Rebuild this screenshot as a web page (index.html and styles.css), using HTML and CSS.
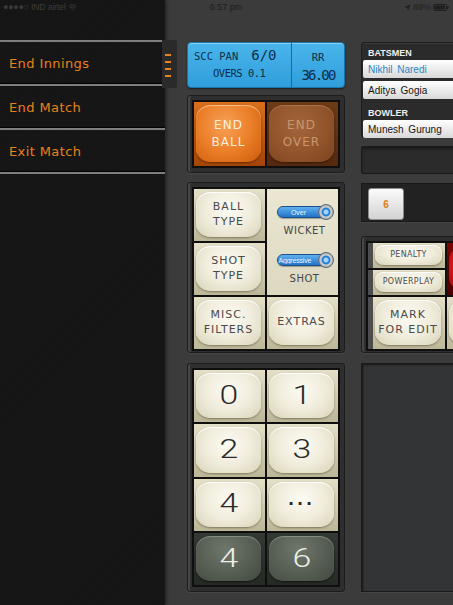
FILE: index.html
```html
<!DOCTYPE html>
<html>
<head>
<meta charset="utf-8">
<title>Scorer</title>
<link rel="stylesheet" href="styles.css">
</head>
<body>
<div class="statusbar">
  <div class="sb-left">●●●●○ IND airtel <svg class="wifi" width="9" height="7" viewBox="0 0 9 7"><path d="M0.5 2.5 Q4.5 -0.8 8.5 2.5 M2 4 Q4.5 1.8 7 4 M3.5 5.5 Q4.5 4.6 5.5 5.5" fill="none" stroke="currentColor" stroke-width="1"/></svg></div>
  <div class="sb-center">6:57 pm</div>
  <div class="sb-right"><svg width="7" height="7" viewBox="0 0 7 7"><path d="M6.5 0.5 L0.5 3 L3.2 3.8 L4 6.5 Z" fill="currentColor"/></svg> 88% <svg width="16" height="7" viewBox="0 0 16 7"><rect x="0.5" y="0.5" width="13" height="6" rx="1" fill="none" stroke="currentColor"/><rect x="1.5" y="1.5" width="10.5" height="4" fill="currentColor"/><rect x="14" y="2" width="1.5" height="3" fill="currentColor"/></svg></div>
</div>
<div class="app">
  <aside class="sidebar">
    <nav class="menu">
      <div class="menu-item">End Innings</div>
      <div class="menu-item">End Match</div>
      <div class="menu-item">Exit Match</div>
    </nav>
  </aside>
  <div class="handle"><span></span><span></span><span></span><span></span></div>
  <main class="main">
    <section class="col-left">
      <div class="lcd">
        <div class="lcd-left">
          <div class="lcd-row"><span class="lcd-sm">SCC PAN</span><span class="lcd-lg">6/0</span></div>
          <div class="lcd-row lcd-row2"><span class="lcd-sm lcd-tight">OVERS 0.1</span></div>
        </div>
        <div class="lcd-right">
          <span class="lcd-sm">RR</span>
          <span class="lcd-lg lcd-rr">36.00</span>
        </div>
      </div>

      <div class="panel panel-actions">
        <div class="grid grid-actions">
          <div class="cell cell-orange"><div class="face">END<br>BALL</div></div>
          <div class="cell cell-brown"><div class="face">END<br>OVER</div></div>
        </div>
      </div>

      <div class="panel panel-options">
        <div class="grid grid-options">
          <div class="cell"><div class="face">BALL<br>TYPE</div></div>
          <div class="cell cell-toggles">
            <div class="toggle"><span class="toggle-text">Over</span><span class="knob"></span></div>
            <div class="toggle-label">WICKET</div>
            <div class="toggle toggle2"><span class="toggle-text">Aggressive</span><span class="knob"></span></div>
            <div class="toggle-label">SHOT</div>
          </div>
          <div class="cell"><div class="face">SHOT<br>TYPE</div></div>
          <div class="cell"><div class="face">MISC.<br>FILTERS</div></div>
          <div class="cell"><div class="face">EXTRAS</div></div>
        </div>
      </div>

      <div class="panel panel-numpad">
        <div class="grid grid-numpad">
          <div class="cell num"><div class="face"><span>0</span></div></div>
          <div class="cell num"><div class="face"><span>1</span></div></div>
          <div class="cell num"><div class="face"><span>2</span></div></div>
          <div class="cell num"><div class="face"><span>3</span></div></div>
          <div class="cell num"><div class="face"><span>4</span></div></div>
          <div class="cell num"><div class="face"><span class="dots">···</span></div></div>
          <div class="cell num cell-dark"><div class="face"><span>4</span></div></div>
          <div class="cell num cell-dark"><div class="face"><span>6</span></div></div>
        </div>
      </div>
    </section>

    <section class="col-right">
      <div class="players">
        <div class="plabel">BATSMEN</div>
        <div class="prow prow-active">Nikhil Naredi</div>
        <div class="prow">Aditya Gogia</div>
        <div class="plabel plabel2">BOWLER</div>
        <div class="prow">Munesh Gurung</div>
      </div>
      <div class="darkbox"></div>
      <div class="tabs"><div class="tab">6</div></div>
      <div class="panel panel-extras">
        <div class="grid grid-extras">
          <div class="cell cell-small cell-edge"><div class="face face-small">PENALTY</div></div>
          <div class="cell cell-red"><div class="face"></div></div>
          <div class="cell cell-small cell-edge"><div class="face face-small">POWERPLAY</div></div>
          <div class="cell cell-edge"><div class="face">MARK<br>FOR EDIT</div></div>
          <div class="cell"><div class="face"></div></div>
        </div>
      </div>
      <div class="bigbox"></div>
    </section>
  </main>
</div>
</body>
</html>
```

FILE: styles.css
```css
* { box-sizing: border-box; margin: 0; padding: 0; }
html, body { width: 453px; height: 605px; overflow: hidden; }
body {
  background: #3b3b3b;
  font-family: "DejaVu Sans", sans-serif;
  position: relative;
}

/* status bar */
.statusbar {
  position: absolute; top: 0; left: 0; width: 453px; height: 14px;
  display: grid; grid-template-columns: 1fr auto 1fr; align-items: center;
  font: 9px "Liberation Sans", sans-serif; z-index: 10; padding: 0 4px 0 3px;
}
.sb-left { color: #3a3a3a; display: flex; align-items: center; gap: 3px; letter-spacing: -0.3px; }
.sb-center { color: #1c1c1c; }
.sb-right { color: #1f1f1f; display: flex; align-items: center; justify-content: flex-end; gap: 2px; }

.app { display: flex; height: 605px; position: relative; }

/* sidebar */
.sidebar {
  width: 165px; flex: none; position: relative; z-index: 1;
  background: repeating-linear-gradient(135deg, #171717 0 1px, #151515 1px 3px);
  box-shadow: 2px 0 3px rgba(0,0,0,.35);
}
.menu { margin-top: 40px; border-top: 2px solid #7e7e7e; }
.menu-item {
  height: 44px; border-bottom: 2px solid #7e7e7e;
  box-shadow: inset 0 -1px 0 #000;
  display: flex; align-items: center; padding-left: 9px;
  color: #e8821b; font-size: 13px; letter-spacing: .4px;
}
.handle {
  position: absolute; left: 162px; top: 40px; width: 15px; height: 48px; z-index: 2;
  background: #2a2a2a; border-radius: 0 2px 2px 0;
  display: flex; flex-direction: column; gap: 5px; padding: 14px 0 0 3px;
}
.handle span { width: 6px; height: 2px; background: #e8821b; }

/* main */
.main {
  flex: 1; display: flex; gap: 16px; padding: 42px 0 0 22px; overflow: hidden;
}
.col-left { width: 158px; flex: none; display: flex; flex-direction: column; }
.col-right { width: 180px; flex: none; display: flex; flex-direction: column; }

/* LCD */
.lcd {
  height: 46px; display: flex;
  background: linear-gradient(#4ab5ec, #2f9edb);
  border: 1px solid #1b76ad; border-radius: 4px;
  box-shadow: inset 0 1px 0 rgba(255,255,255,.35), 0 1px 2px rgba(0,0,0,.5);
  color: #0e2d48; font-family: "DejaVu Sans Mono", monospace;
}
.lcd-left { width: 104px; border-right: 1px solid #1c6898; padding: 4px 0 0 6px; display: flex; flex-direction: column; }
.lcd-row { display: flex; align-items: baseline; gap: 13px; height: 20px; }
.lcd-row2 { padding-left: 19px; }
.lcd-right { flex: 1; display: flex; flex-direction: column; align-items: center; padding-top: 4px; }
.lcd-right .lcd-sm { height: 20px; display: flex; align-items: center; }
.lcd-sm { font-size: 10.5px; }
.lcd-tight { letter-spacing: -0.5px; }
.lcd-lg { font-size: 14px; }
.lcd-rr { letter-spacing: -1.8px; }

/* panels */
.panel {
  background: #2e2e2e; border: 1px solid #1c1c1c; border-radius: 3px;
  box-shadow: inset 2px 0 0 #474747, 0 1px 0 #464646;
  padding: 4px;
}
.grid { display: grid; background: #0f0f0f; padding: 2px; gap: 2px; height: 100%; }
.panel-actions { margin-top: 7px; height: 78px; }
.grid-actions { grid-template-columns: 1fr 1fr; }
.panel-options { margin-top: 9px; height: 171px; padding-bottom: 1px; }
.grid-options { grid-template-columns: 1fr 1fr; grid-template-rows: 1fr 1fr 1fr; }
.cell-toggles { grid-row: span 2; }
.panel-numpad { margin-top: 10px; height: 229px; }
.grid-numpad { grid-template-columns: 1fr 1fr; grid-template-rows: repeat(4, 1fr); }

/* cells & pillow buttons */
.cell {
  display: flex; padding: 3px 4px 4px 2px;
  background: linear-gradient(#e4dfc7, #bdb799);
}
.face {
  flex: 1; border-radius: 15px / 13px;
  background: radial-gradient(ellipse at 50% 38%, #fcfbf3 0%, #f1eddd 50%, #e3dec7 80%, #cfc9ae 100%);
  box-shadow: 0 1px 2px rgba(60,55,30,.5), inset 0 1px 1px #fff;
  display: flex; align-items: center; justify-content: center; text-align: center;
  color: #4a4a4a; font-size: 11px; letter-spacing: 1px; line-height: 1.35;
}
.cell-orange { background: linear-gradient(#d96f1c, #a44507); }
.cell-orange .face {
  background: radial-gradient(ellipse at 45% 35%, #f6a157 0%, #ec7f29 50%, #d96a17 80%, #c15810 100%);
  box-shadow: 0 1px 2px rgba(60,20,0,.6), inset 0 1px 1px rgba(255,220,180,.7);
  color: #fdeede; font-size: 12px;
}
.cell-brown { background: linear-gradient(#6d3a16, #55290e); }
.cell-brown .face {
  background: radial-gradient(ellipse at 45% 35%, #a3653b 0%, #92542b 55%, #7d441f 100%);
  box-shadow: 0 1px 2px rgba(30,10,0,.6), inset 0 1px 1px rgba(220,160,120,.4);
  color: #c9966f; font-size: 12px;
}
.num .face span {
  font-family: Roboto, "DejaVu Sans", sans-serif; font-size: 25px; font-weight: 300;
  display: inline-block; transform: scaleX(1.35); letter-spacing: 0; color: #2a2a2a;
}
.num .face .dots { font-family: "DejaVu Sans", sans-serif; font-size: 16px; font-weight: bold; letter-spacing: 3px; transform: none; }
.cell-dark { background: linear-gradient(#343a33, #262a25); }
.cell-dark .face {
  background: radial-gradient(ellipse at 45% 30%, #6e776a 0%, #565e53 55%, #42483f 100%);
  box-shadow: 0 1px 2px rgba(0,0,0,.6), inset 0 1px 1px rgba(200,210,195,.4);
}
.cell-dark .face span { color: #eeefe8; }

/* toggles */
.cell-toggles {
  flex-direction: column; align-items: center; padding: 17px 0 0 4px;
  background: linear-gradient(#ebe7d3, #ddd8c0);
}
.toggle {
  width: 56px; height: 12px; border-radius: 7px; position: relative;
  background: linear-gradient(#5fb1ef, #2272c6);
  border: 1px solid #1a4f8c; box-shadow: 0 1px 1px rgba(0,0,0,.3);
  display: flex; align-items: center;
}
.toggle-text { color: #eaf4ff; font: 7px "Liberation Sans", sans-serif; width: 42px; text-align: center; white-space: nowrap; overflow: hidden; }
.knob {
  position: absolute; right: -2px; top: -3px; width: 16px; height: 16px; border-radius: 50%;
  background: radial-gradient(circle, #9fd3ff 0 2px, #2c7fd0 3px 4px, #d7d7d7 5px, #8e8e8e 8px);
  border: 1px solid #5e6d7c;
}
.toggle-label { margin-top: 7px; font-size: 10px; color: #454545; letter-spacing: .5px; }
.toggle2 { margin-top: 18px; }
.toggle2 .toggle-text { text-align: left; padding-left: 1px; width: 44px; letter-spacing: -.2px; }

/* right column */
.players {
  height: 96px; background: #2b2b2b; border: 1px solid #1d1d1d; border-radius: 3px 0 0 3px;
  box-shadow: inset 0 1px 0 #393939; padding: 2px 0 0 1px;
}
.plabel {
  height: 15px; padding-left: 5px; display: flex; align-items: center;
  font: bold 9px "Liberation Sans", sans-serif; color: #f0f0f0;
}
.plabel2 { height: 18px; padding-top: 4px; margin-top: 0; }
.prow {
  height: 18px; margin-bottom: 3px; border-radius: 2px 0 0 2px;
  background: linear-gradient(#ffffff, #d9d9d9);
  font: 10px "Liberation Sans", sans-serif; color: #161616; word-spacing: 2px;
  display: flex; align-items: center; padding-left: 5px;
}
.prow-active { color: #2d84c6; }
.darkbox {
  margin-top: 8px; height: 28px; background: #2b2b2b; border: 1px solid #1a1a1a; border-radius: 2px 0 0 2px;
  box-shadow: inset 0 2px 3px rgba(0,0,0,.45);
}
.tabs {
  margin-top: 9px; height: 39px; background: #222; border: 1px solid #181818;
  padding: 4px 0 0 6px; box-shadow: 0 1px 0 #444;
}
.tab {
  width: 36px; height: 32px; border-radius: 3px; border: 1px solid #8c8c8c;
  background: linear-gradient(#fbfbfb, #d3d3d3);
  color: #e07a12; font: bold 10px "Liberation Sans", sans-serif;
  display: flex; align-items: center; justify-content: center;
}
.panel-extras { margin-top: 14px; height: 117px; padding-bottom: 1px; }
.grid-extras { grid-template-columns: 77px 80px; grid-template-rows: 25px 25px 1fr; }
.cell-edge { border-left: 5px solid #4d4d4d; }
.cell-small { padding: 2px 3px 3px 2px; }
.face-small { font-size: 8px; border-radius: 9px / 8px; letter-spacing: .3px; }
.cell-red { grid-row: span 2; background: linear-gradient(#7a0606, #4e0202); }
.cell-red .face {
  background: radial-gradient(ellipse at 40% 45%, #f22c20 0%, #c81212 50%, #8a0505 100%);
  box-shadow: 0 1px 2px rgba(0,0,0,.6);
}
.bigbox {
  margin-top: 10px; height: 229px; background: #333436; border: 1px solid #1a1a1a;
  box-shadow: inset 1px 1px 2px rgba(0,0,0,.6), 0 1px 0 #474747;
}
```
